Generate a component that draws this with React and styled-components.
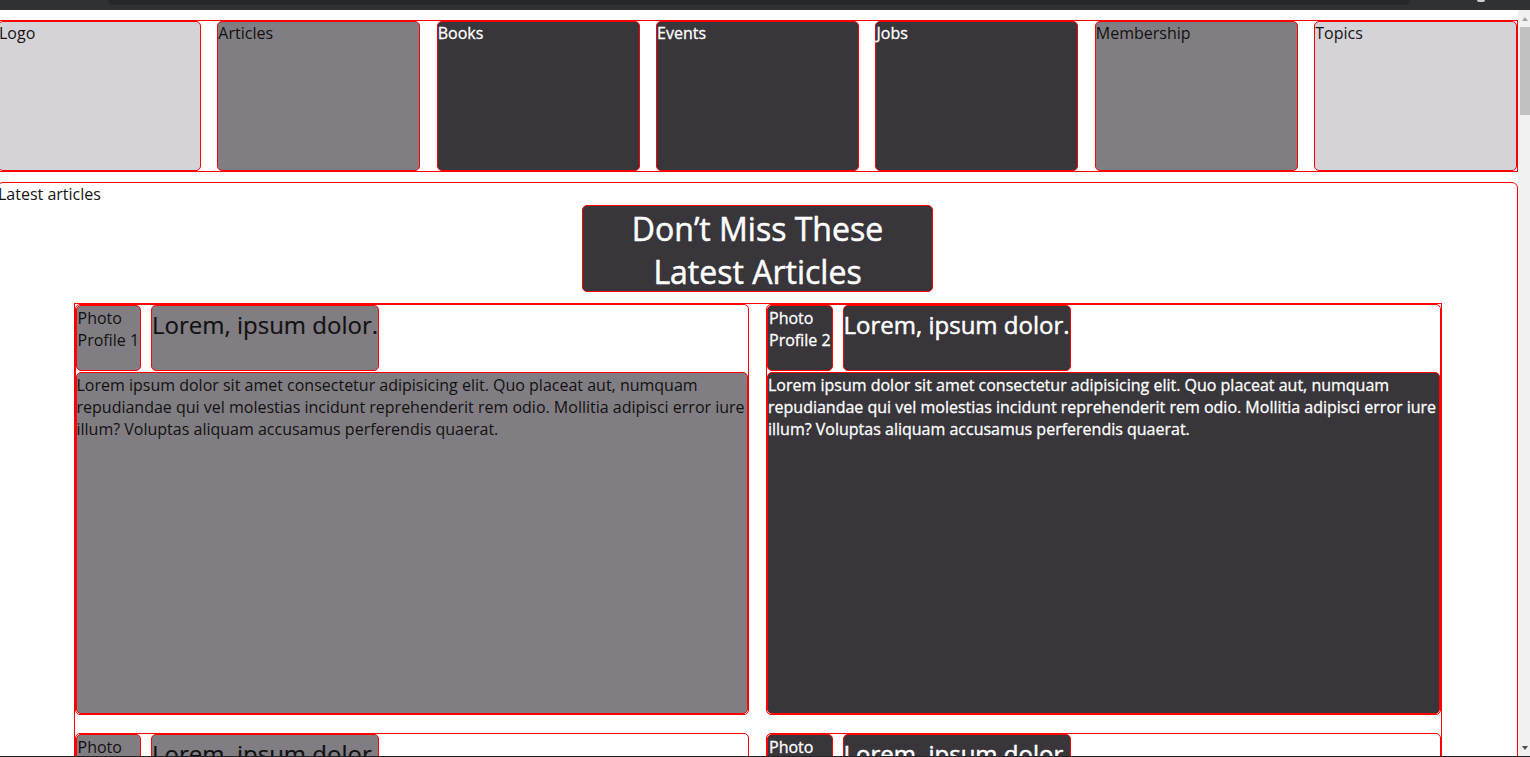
import React from 'react';
import styled, { createGlobalStyle } from 'styled-components';

const tones = {
  light: { bg: '#d5d2d8', fg: '#141414', stroke: '0' },
  mid: { bg: '#817e83', fg: '#111111', stroke: '0' },
  dark: { bg: '#38353b', fg: '#ffffff', stroke: '0.3px' },
};

const GlobalStyle = createGlobalStyle`
  *, *::before, *::after { box-sizing: border-box; }
  html, body { margin: 0; padding: 0; height: 100%; overflow: hidden; background: #fff; }
  body {
    font-family: "Open Sans", "Noto Sans", sans-serif;
    font-size: 16px;
    line-height: 22px;
    color: #141414;
  }
`;

const Frame = styled.div`
  height: 100vh;
  display: flex;
  flex-direction: column;
`;

const Chrome = styled.div`
  height: 10px;
  flex-shrink: 0;
  display: flex;
  align-items: flex-start;
  padding-left: 108px;
  background: #303134;
`;

const ChromeTab = styled.div`
  width: 1302px;
  height: 5px;
  background: #26272a;
  border-radius: 0 0 6px 6px;
`;

const ChromeSpeck = styled.div`
  margin-left: 67px;
  width: 8px;
  height: 2px;
  background: #cfcfcf;
  border-radius: 0 0 3px 3px;
`;

const Window = styled.div`
  flex: 1;
  min-height: 0;
  display: flex;
`;

const Viewport = styled.div`
  flex: 1;
  min-width: 0;
  overflow: hidden;
  background: #fff;
  padding-top: 10px;
`;

const ScrollTrack = styled.div`
  width: 12px;
  flex-shrink: 0;
  display: flex;
  flex-direction: column;
  background: #f1f1f1;
`;

const ScrollButton = styled.div`
  height: 17px;
  display: flex;
  align-items: center;
  padding-left: 4px;
  margin-top: ${p => (p.down ? 'auto' : '0')};

  &::after {
    content: '';
    width: 0;
    height: 0;
    border-left: 3.5px solid transparent;
    border-right: 3.5px solid transparent;
    ${p =>
      p.down
        ? 'border-top: 4px solid #505050;'
        : 'border-bottom: 4px solid #a3a3a3;'}
  }
`;

const ScrollThumb = styled.div`
  height: 88px;
  margin-left: 2px;
  background: #c1c1c1;
`;

const BottomEdge = styled.div`
  height: 1px;
  flex-shrink: 0;
  background: #202124;
`;

const Page = styled.div`
  margin-left: -3px;
  width: calc(100% + 3px);
`;

const Nav = styled.nav`
  display: grid;
  grid-template-columns: repeat(7, 1fr);
  column-gap: 16.6px;
  border: 1px solid red;
`;

const NavItem = styled.div`
  height: 150px;
  border: 1px solid red;
  border-radius: 5px;
  background: ${p => tones[p.tone].bg};
  color: ${p => tones[p.tone].fg};
  -webkit-text-stroke: ${p => tones[p.tone].stroke} currentColor;
`;

const Main = styled.main`
  margin-top: 10px;
  border: 1px solid red;
  border-radius: 6px;
  height: 1200px;
`;

const SectionLabel = styled.div`
  line-height: 22px;
`;

const Heading = styled.h1`
  width: 351px;
  height: 87px;
  margin: 0 auto;
  padding-top: 1px;
  border: 1px solid red;
  border-radius: 5px;
  background: #38353b;
  color: #fff;
  font-size: 32px;
  font-weight: 400;
  line-height: 43px;
  text-align: center;
  -webkit-text-stroke: 0.5px currentColor;
`;

const CardGrid = styled.div`
  width: 1368px;
  margin: 11px auto 0;
  border: 1px solid red;
  border-bottom: none;
  display: grid;
  grid-template-columns: 1fr 1fr;
  column-gap: 17px;
  row-gap: 18px;
`;

const Card = styled.article`
  height: 411px;
  border: 1px solid red;
  border-radius: 5px;
  display: flex;
  flex-direction: column;
`;

const CardHeader = styled.div`
  height: 67px;
  padding-bottom: 1px;
  display: flex;
  gap: 10px;
`;

const Photo = styled.div`
  padding: 1px 1px 0;
  border: 1px solid red;
  border-radius: 5px;
  background: ${p => tones[p.tone].bg};
  color: ${p => tones[p.tone].fg};
  -webkit-text-stroke: ${p => tones[p.tone].stroke} currentColor;
  font-size: 16px;
  line-height: 22px;
`;

const CardTitle = styled.h2`
  margin: 0;
  padding-top: 2px;
  border: 1px solid red;
  border-radius: 5px;
  background: ${p => tones[p.tone].bg};
  color: ${p => tones[p.tone].fg};
  -webkit-text-stroke: ${p => (p.tone === 'dark' ? '0.5px' : '0.2px')} currentColor;
  font-size: 24px;
  font-weight: 400;
  line-height: 34px;
`;

const CardBody = styled.p`
  flex: 1;
  margin: 0;
  padding-top: 1px;
  border: 1px solid red;
  border-radius: 5px;
  background: ${p => tones[p.tone].bg};
  color: ${p => tones[p.tone].fg};
  -webkit-text-stroke: ${p => tones[p.tone].stroke} currentColor;
  font-size: 16px;
  line-height: 22px;
`;

const navLinks = [
  { label: 'Logo', tone: 'light' },
  { label: 'Articles', tone: 'mid' },
  { label: 'Books', tone: 'dark' },
  { label: 'Events', tone: 'dark' },
  { label: 'Jobs', tone: 'dark' },
  { label: 'Membership', tone: 'mid' },
  { label: 'Topics', tone: 'light' },
];

const articles = [
  { id: 1, tone: 'mid' },
  { id: 2, tone: 'dark' },
  { id: 3, tone: 'mid' },
  { id: 4, tone: 'dark' },
];

const lorem =
  'Lorem ipsum dolor sit amet consectetur adipisicing elit. Quo placeat aut, numquam repudiandae qui vel molestias incidunt reprehenderit rem odio. Mollitia adipisci error iure illum? Voluptas aliquam accusamus perferendis quaerat.';

export default function App() {
  return (
    <>
      <GlobalStyle />
      <Frame>
        <Chrome>
          <ChromeTab />
          <ChromeSpeck />
        </Chrome>
        <Window>
          <Viewport>
            <Page>
              <Nav>
                {navLinks.map(link => (
                  <NavItem key={link.label} tone={link.tone}>
                    {link.label}
                  </NavItem>
                ))}
              </Nav>
              <Main>
                <SectionLabel>Latest articles</SectionLabel>
                <Heading>Don’t Miss These Latest Articles</Heading>
                <CardGrid>
                  {articles.map(a => (
                    <Card key={a.id}>
                      <CardHeader>
                        <Photo tone={a.tone}>
                          Photo
                          <br />
                          Profile {a.id}
                        </Photo>
                        <CardTitle tone={a.tone}>Lorem, ipsum dolor.</CardTitle>
                      </CardHeader>
                      <CardBody tone={a.tone}>{lorem}</CardBody>
                    </Card>
                  ))}
                </CardGrid>
              </Main>
            </Page>
          </Viewport>
          <ScrollTrack>
            <ScrollButton />
            <ScrollThumb />
            <ScrollButton down />
          </ScrollTrack>
        </Window>
        <BottomEdge />
      </Frame>
    </>
  );
}
